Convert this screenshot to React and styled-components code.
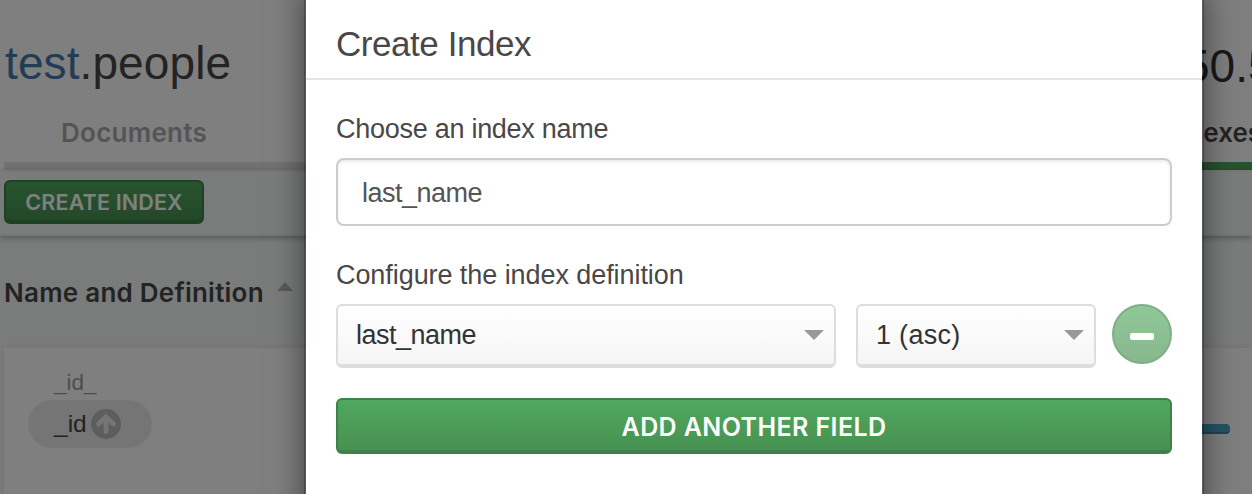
import React from "react";
import styled, { createGlobalStyle } from "styled-components";

const GlobalStyle = createGlobalStyle`
  * { box-sizing: border-box; }
  body {
    margin: 0;
    overflow: hidden;
    background: #fff;
    color: #494747;
    font-family: "Liberation Sans", Arial, sans-serif;
    -webkit-font-smoothing: antialiased;
  }
`;

const Screen = styled.div`
  position: relative;
  width: 1252px;
  height: 494px;
  overflow: hidden;
`;

const Page = styled.div`
  display: flex;
  flex-direction: column;
  height: 100%;
  background: #f5f8f7;
`;

const Header = styled.header`
  display: flex;
  justify-content: space-between;
  height: 110px;
  padding: 36px 0 0 5px;
  background: #fff;
`;

const Namespace = styled.h1`
  margin: 0;
  font-size: 46px;
  line-height: 54px;
  font-weight: 400;
  letter-spacing: 0.1px;
  white-space: nowrap;
`;

const Database = styled.span`
  color: #4479ad;
`;

const Stat = styled.div`
  width: 68px;
  padding-top: 1px;
  font-size: 46px;
  line-height: 58px;
  letter-spacing: 0;
  color: #333;
  white-space: nowrap;
`;

const Tabs = styled.nav`
  display: flex;
  height: 60px;
  padding-left: 4px;
  background: #fff;
`;

const Tab = styled.div`
  display: flex;
  align-items: center;
  justify-content: ${(p) => (p.$active ? "flex-start" : "center")};
  width: ${(p) => p.$width}px;
  height: 60px;
  padding-bottom: 7px;
  padding-left: ${(p) => (p.$active ? 44 : 0)}px;
  border-bottom: 8px solid ${(p) => (p.$active ? "#4fa65b" : "#e4e4e4")};
  color: ${(p) => (p.$active ? "#494747" : "#a9a9a9")};
  font: 600 26px/30px Inter, sans-serif;
  letter-spacing: ${(p) => (p.$active ? "0" : "0.25px")};
  white-space: nowrap;
`;

const Toolbar = styled.div`
  flex: none;
  height: 66px;
  padding: 8px 4px;
  background: #f5f8f7;
  border-top: 2px solid #edefee;
  border-bottom: 2px solid #ebeeed;
  box-shadow: 0 2px 6px rgba(0, 0, 0, 0.3);
`;

const Button = styled.button`
  display: block;
  width: ${(p) => p.$width};
  height: ${(p) => p.$height}px;
  padding: 4px 0 0;
  border: 2px solid #3f8149;
  border-bottom-width: 4px;
  border-radius: 6px;
  background: linear-gradient(#50a85d, #479152);
  color: #fff;
  font: 600 ${(p) => p.$size}px/1 Inter, sans-serif;
  letter-spacing: ${(p) => p.$spacing}px;
  text-align: center;
`;

const TableHead = styled.div`
  display: flex;
  align-items: center;
  height: 112px;
  padding: 2px 0 0 4px;
  color: #464646;
  font: 600 26px/32px Inter, sans-serif;
  letter-spacing: 0.24px;
`;

const SortCaret = styled.span`
  margin: -14px 0 0 13px;
  border: 8px solid transparent;
  border-top: 0;
  border-bottom: 9px solid #b4b4b4;
`;

const IndexRow = styled.div`
  display: flex;
  justify-content: space-between;
  flex: 1;
  margin-left: 4px;
  padding: 22px 22px 0 24px;
  background: #fff;
  box-shadow: 0 0 8px rgba(40, 0, 0, 0.1);
`;

const IndexName = styled.div`
  padding-left: 26px;
  color: #9b9b9b;
  font-size: 22.5px;
  line-height: 26px;
`;

const FieldPill = styled.div`
  display: flex;
  align-items: center;
  gap: 4px;
  width: 124px;
  height: 48px;
  margin-top: 4px;
  padding-left: 26px;
  border-radius: 24px;
  background: #ebebeb;
  color: #464646;
  font-size: 24.5px;
`;

const UsageBar = styled.div`
  width: 80px;
  height: 10px;
  margin-top: 54px;
  border-radius: 4px;
  border-bottom: 2px solid #3c88a8;
  background: #4ba8cc;
`;

const Backdrop = styled.div`
  position: absolute;
  inset: 0;
  background: rgba(0, 0, 0, 0.5);
`;

const Modal = styled.section`
  position: absolute;
  top: -20px;
  left: 304px;
  width: 900px;
  height: 560px;
  padding-top: 18px;
  border: 2px solid rgba(0, 0, 0, 0.25);
  background: #fff;
  background-clip: padding-box;
  box-shadow: 0 10px 30px rgba(0, 0, 0, 0.5);
`;

const ModalHeader = styled.header`
  height: 80px;
  padding: 24px 30px 0;
  border-bottom: 2px solid #e5e5e5;
`;

const ModalTitle = styled.h2`
  margin: 0;
  font-size: 35px;
  line-height: 40px;
  font-weight: 400;
  letter-spacing: -0.45px;
`;

const Form = styled.div`
  display: flex;
  flex-direction: column;
  padding: 32px 30px 0;
`;

const Label = styled.label`
  margin-bottom: 12px;
  font-size: 27px;
  line-height: 34px;
  letter-spacing: ${(p) => p.$spacing}px;
`;

const NameInput = styled.input`
  width: 100%;
  height: 68px;
  margin-bottom: 32px;
  padding: 2px 24px 0;
  border: 2px solid #ccc;
  border-radius: 8px;
  outline: 0;
  box-shadow: inset 0 2px 3px rgba(0, 0, 0, 0.08);
  color: #555;
  font: 27px "Liberation Sans", Arial, sans-serif;
  letter-spacing: -0.5px;
`;

const FieldRow = styled.div`
  display: flex;
  margin-bottom: 30px;
`;

const Select = styled.div`
  display: flex;
  align-items: center;
  justify-content: space-between;
  width: ${(p) => p.$width}px;
  height: 64px;
  margin-right: ${(p) => p.$gap}px;
  padding: 0 10px 0 18px;
  border: 2px solid #ddd;
  border-bottom-width: 4px;
  border-radius: 6px;
  background: linear-gradient(#fff, #f5f5f5);
  color: #333;
  font-size: 27px;
  letter-spacing: ${(p) => p.$spacing}px;
`;

const Caret = styled.span`
  border: 10px solid transparent;
  border-top-color: #999;
  border-bottom: 0;
`;

const RemoveButton = styled.button`
  display: flex;
  align-items: center;
  justify-content: center;
  width: 60px;
  height: 60px;
  padding: 4px 0 0;
  border: 2px solid #80ae87;
  border-radius: 50%;
  background: linear-gradient(#8fc898, #88b78f);
`;

const Minus = styled.span`
  width: 24px;
  height: 7px;
  border-radius: 2px;
  background: #fff;
`;

function AscendingIcon() {
  return (
    <svg width="30" height="30" viewBox="0 0 30 30">
      <circle cx="15" cy="15" r="15" fill="#bbb" />
      <path
        d="M15 8v14.5M7.5 15 15 7.8 22.5 15"
        fill="none"
        stroke="#ebebeb"
        strokeWidth="4.8"
        strokeLinecap="round"
        strokeLinejoin="miter"
      />
    </svg>
  );
}

export default function App() {
  return (
    <Screen>
      <GlobalStyle />
      <Page>
        <Header>
          <Namespace>
            <Database>test</Database>.people
          </Namespace>
          <Stat>50.5</Stat>
        </Header>
        <Tabs>
          <Tab $width={260}>Documents</Tab>
          <Tab $width={856} />
          <Tab $width={132} $active>Indexes</Tab>
        </Tabs>
        <Toolbar>
          <Button $width="200px" $height={44} $size={21.5} $spacing={0.15}>
            CREATE INDEX
          </Button>
        </Toolbar>
        <TableHead>
          Name and Definition
          <SortCaret />
        </TableHead>
        <IndexRow>
          <div>
            <IndexName>_id_</IndexName>
            <FieldPill>
              _id
              <AscendingIcon />
            </FieldPill>
          </div>
          <UsageBar />
        </IndexRow>
      </Page>
      <Backdrop />
      <Modal>
        <ModalHeader>
          <ModalTitle>Create Index</ModalTitle>
        </ModalHeader>
        <Form>
          <Label htmlFor="index-name" $spacing={-0.27}>Choose an index name</Label>
          <NameInput id="index-name" defaultValue="last_name" />
          <Label $spacing={-0.07}>Configure the index definition</Label>
          <FieldRow>
            <Select $width={500} $gap={20} $spacing={-0.5}>
              last_name
              <Caret />
            </Select>
            <Select $width={240} $gap={16} $spacing={0.3}>
              1 (asc)
              <Caret />
            </Select>
            <RemoveButton aria-label="Remove field">
              <Minus />
            </RemoveButton>
          </FieldRow>
          <Button $width="100%" $height={56} $size={25} $spacing={0.4}>
            ADD ANOTHER FIELD
          </Button>
        </Form>
      </Modal>
    </Screen>
  );
}
